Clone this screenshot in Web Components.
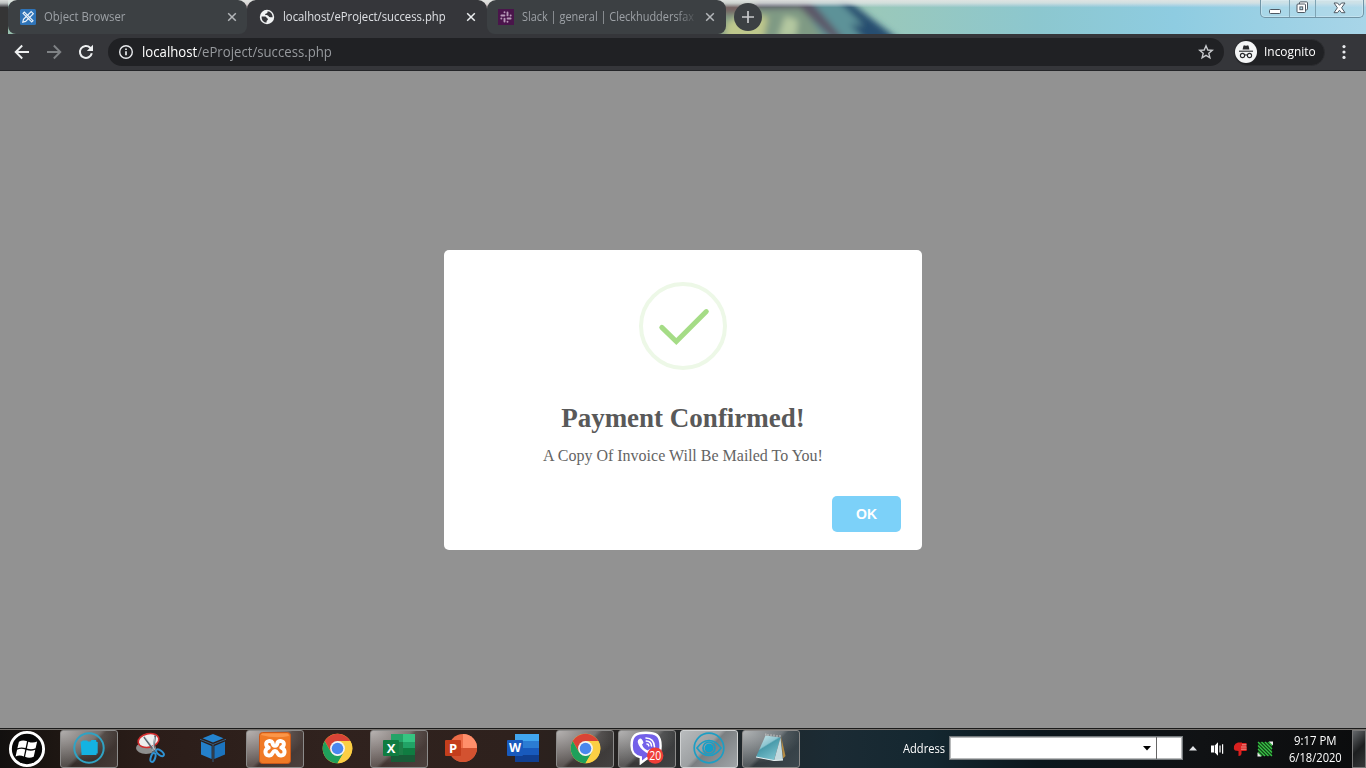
<!DOCTYPE html>
<html lang="en">
<head>
<meta charset="utf-8">
<title>localhost/eProject/success.php</title>
<style>
html,body{margin:0;width:1366px;height:768px;overflow:hidden;background:#929292}
body{font-family:"Open Sans","Noto Sans",sans-serif}
</style>
</head>
<body>
<desktop-screen></desktop-screen>
<script>
const define=(name,html,setup)=>customElements.define(name,class extends HTMLElement{
  connectedCallback(){
    if(this.shadowRoot)return;
    const root=this.attachShadow({mode:"open"});
    const t=document.createElement("template");
    t.innerHTML=typeof html==="function"?html(this):html;
    root.append(t.content.cloneNode(true));
    if(setup)setup(this,root);
  }
});

/* A line of text condensed to a given width */
define("fit-text",`<style>:host{display:block;flex:none;white-space:nowrap;overflow:visible}
span{display:inline-block;transform-origin:0 50%}</style><span><slot></slot></span>`,(el,root)=>{
  const s=root.querySelector("span"),w=+el.getAttribute("w");
  el.style.width=w+"px";
  s.style.transform="scaleX("+w/s.offsetWidth+")";
});

/* Icons */
const chrome=`<svg width="31" height="31" viewBox="0 0 48 48"><circle cx="24" cy="24" r="23" fill="#fbc93a"/>
<path d="M4.1 12.5A23 23 0 0 1 43.9 12.5H24L14 29.7Z" fill="#d94436"/><path d="M4.1 12.5A23 23 0 0 0 24 47L34 29.7 24 35.5 14 29.7Z" fill="#1fa05b"/>
<path d="M24 47A23 23 0 0 0 43.9 12.5H24L34 29.7Z" fill="#fccf44"/><circle cx="24" cy="24" r="11.5" fill="#f3f3f3"/><circle cx="24" cy="24" r="9" fill="#4a87ee"/></svg>`;
const icons={
object:`<svg width="16" height="16" viewBox="0 0 16 16"><rect width="16" height="16" rx="1.5" fill="#2f74b8"/><g fill="none" stroke="#eaf2fa" stroke-width="1.2"><path d="M3 4.3 4.3 3 13 11.7 11.7 13Z"/><path d="M11.2 2.6 13.3 4.7 5.6 12.4 2.8 13.1 3.5 10.3Z"/></g></svg>`,
globe:`<svg width="16" height="16" viewBox="0 0 16 16"><circle cx="8" cy="8" r="7.2" fill="#f1f3f4"/><path d="M2.6 7.4H6C7.7 7.4 7.4 9.4 8.8 9.6V11C8 11.2 7.4 11.8 7.6 13.6 4.6 13.4 2.4 11 2.6 7.4Z" fill="#35363a"/><path d="M8.6 2.3 8.4 3.8C8 4.8 6.6 4.4 6 5.4 6.4 6.6 8.8 6 9.6 7 10 8.4 11.4 8.4 13.6 8.2 13.6 5 11.6 2.6 8.6 2.3Z" fill="#35363a"/></svg>`,
slack:`<svg width="16" height="16" viewBox="0 0 16 16"><rect width="16" height="16" fill="#4a154b"/><g stroke="#b79ab8" stroke-width="1.9" stroke-linecap="round"><path d="M6.5 3.2V3.3M3.4 6.5H6.4M9.5 3.5V6.4M12.7 6.5H12.6M9.5 12.8V12.7M12.6 9.5H9.6M6.5 12.5V9.6M3.3 9.5H3.4"/></g></svg>`,
close:`<svg width="10" height="10" viewBox="0 0 10 10"><path d="M1.2 1.2 8.8 8.8M8.8 1.2 1.2 8.8" stroke="currentColor" stroke-width="1.5"/></svg>`,
back:`<svg width="16" height="16" viewBox="0 0 16 16"><path d="M15 8H2M8.2 1.5 1.7 8 8.2 14.5" fill="none" stroke="currentColor" stroke-width="1.9"/></svg>`,
forward:`<svg width="16" height="16" viewBox="0 0 16 16"><path d="M1 8H14M7.8 1.5 14.3 8 7.8 14.5" fill="none" stroke="currentColor" stroke-width="1.9"/></svg>`,
reload:`<svg width="16" height="16" viewBox="0 0 16 16"><path d="M13.8 9.2A6 6 0 1 1 12.2 3.7L13.5 5" fill="none" stroke="currentColor" stroke-width="2"/><path d="M15 .8V7H8.8Z" fill="currentColor"/></svg>`,
info:`<svg width="16" height="16" viewBox="0 0 16 16"><circle cx="8" cy="8" r="6.3" fill="none" stroke="#e8eaed" stroke-width="1.4"/><path d="M8 7.2V11.3M8 4.4V6" stroke="#e8eaed" stroke-width="1.7"/></svg>`,
star:`<svg width="16" height="16" viewBox="0 0 16 16"><path d="M8 1.8 9.8 6 14.3 6.3 10.8 9.3 11.9 13.8 8 11.4 4.1 13.8 5.2 9.3 1.7 6.3 6.2 6Z" fill="none" stroke="#c8cacd" stroke-width="1.4"/></svg>`,
incognito:`<svg width="22" height="22" viewBox="0 0 22 22"><circle cx="11" cy="11" r="11" fill="#f4f5f6"/><path d="M7.6 8.6 8.4 4.9Q8.7 4.2 9.5 4.4L11 4.8 12.5 4.4Q13.3 4.2 13.6 4.9L14.4 8.6Z" fill="#292a2d"/><path d="M4 10.2H18" stroke="#292a2d" stroke-width="1.1"/><g fill="none" stroke="#292a2d" stroke-width="1.1"><circle cx="7.5" cy="14.5" r="2.1"/><circle cx="14.5" cy="14.5" r="2.1"/><path d="M9.7 14.2Q11 13.4 12.3 14.2"/></g></svg>`,
menu:`<svg width="4" height="16" viewBox="0 0 4 16" fill="#e8eaed"><circle cx="2" cy="2.6" r="1.6"/><circle cx="2" cy="8" r="1.6"/><circle cx="2" cy="13.4" r="1.6"/></svg>`,
start:`<svg width="38" height="38" viewBox="0 0 38 38"><circle cx="19" cy="19" r="16.6" fill="#060606" stroke="#fff" stroke-width="2.9"/><g fill="#fff" transform="translate(-.5 -.6) scale(1.04)"><path d="M11 11.8Q14.5 9.6 18.8 11.3L17.4 18Q13.4 16.6 9.5 18.2Z"/><path d="M20 11.8Q24.5 13.6 28.5 11.7L27 18.2Q22.8 20 18.6 18.4Z"/><path d="M9.2 19.5Q13 17.9 17.1 19.3L15.7 26Q11.7 24.3 7.8 26Z"/><path d="M18.3 19.8Q22.6 21.4 26.7 19.6L25.2 26.4Q20.8 28.2 16.9 26.4Z"/></g></svg>`,
folder:`<svg width="32" height="32" viewBox="0 0 32 32"><circle cx="16" cy="16" r="14.7" fill="none" stroke="#2fa3c4" stroke-width="2"/><path d="M7.5 9.5H9L9.5 8.5H14L15 9.5H17.5L18.5 8H23L23.5 10H24.7V21.5H23.5V23H8.5V21.8L7.8 12Z" fill="#14b3e2"/></svg>`,
snip:`<svg width="34" height="34" viewBox="0 0 34 34"><ellipse cx="12" cy="17" rx="10" ry="6" fill="#8f8f8f"/><ellipse cx="14.5" cy="9.5" rx="10.5" ry="6.8" transform="rotate(-12 14.5 9.5)" fill="#eee" stroke="#d22c2d" stroke-width="1.6"/><path d="M10 6 21 21M21.3 4.5 18.8 22" stroke="#59656f" stroke-width="1.8"/><path d="M11 6 22 20M20.8 6 18.8 20" stroke="#cdd8df" stroke-width=".8"/><g fill="none" stroke="#2f92d2" stroke-width="2"><ellipse cx="19" cy="26.5" rx="2.2" ry="4.6" transform="rotate(18 19 26.5)"/><ellipse cx="26" cy="21.8" rx="2.2" ry="4.6" transform="rotate(-51 26 21.8)"/></g></svg>`,
cube:`<svg width="28" height="30" viewBox="0 0 28 30"><path d="M14 1 24.5 5.2 14 9.4 3.5 5.2Z" fill="#2484d0"/><path d="M2 8.5 12.6 13V26L2 21.5Z" fill="#2480cb"/><path d="M26 8.5 15.4 13V26L26 21.5Z" fill="#1c74be"/><path d="M14 11.5V29M1 6.3 14 11.5 27 6.3" fill="none" stroke="#356c9b" stroke-width=".8"/></svg>`,
xampp:`<svg width="32" height="32" viewBox="0 0 32 32"><rect x=".5" y=".5" width="31" height="31" rx="3" fill="#f07a26" stroke="#c9581a"/><path d="M2 3Q2 1.5 4 1.5H28Q30 1.5 30 4Q16 7 2 3Z" fill="#ffa358" opacity=".7"/><g fill="none" stroke="#fff" stroke-width="4" stroke-linecap="round" stroke-linejoin="round"><path d="M13.5 10.7Q12.5 8.6 9.7 9.1C6.2 9.9 6.4 14.1 9.7 15.6 5.2 17.1 5.4 23.3 10 23.6 14 23.8 13 19 16 19S18 23.8 22 23.6C26.6 23.3 26.8 17.1 22.3 15.6 25.6 14.1 25.8 9.9 22.3 9.1Q19.5 8.6 18.5 10.7C18 14.7 14 14.7 13.5 10.7Z"/></g></svg>`,
chrome,
excel:`<svg width="34" height="30" viewBox="0 0 34 30"><path d="M9 1H33V29H9Z" fill="#1d7f48"/><path d="M9 1H21V9H9Z" fill="#24a367"/><path d="M21 1H33V9H21Z" fill="#36c481"/><path d="M21 9H33V15H21Z" fill="#21a366"/><path d="M21 15H33V22H21Z" fill="#107c41"/><path d="M9 22H33V29H9Z" fill="#185c37"/><rect x="1" y="7" width="16" height="16" rx="1" fill="#107c41"/><text x="9" y="19.5" text-anchor="middle" font-family="Open Sans" font-weight="700" font-size="13" fill="#fff">X</text></svg>`,
ppt:`<svg width="34" height="30" viewBox="0 0 34 30"><circle cx="19" cy="15" r="14" fill="#ed6c47"/><path d="M19 1A14 14 0 0 1 33 15H19Z" fill="#ff8f6b"/><path d="M5 15A14 14 0 0 0 33 15Z" fill="#d35230"/><rect x="1" y="7" width="16" height="16" rx="1" fill="#c43e1c"/><text x="9" y="19.5" text-anchor="middle" font-family="Open Sans" font-weight="700" font-size="13" fill="#fff">P</text></svg>`,
word:`<svg width="34" height="30" viewBox="0 0 34 30"><path d="M9 1H33V8H9Z" fill="#41a5ee"/><path d="M9 8H33V15H9Z" fill="#2b7cd3"/><path d="M9 15H33V22H9Z" fill="#185abd"/><path d="M9 22H33V29H9Z" fill="#103f91"/><rect x="1" y="7" width="16" height="16" rx="1" fill="#185abd"/><text x="9" y="19.3" text-anchor="middle" font-family="Open Sans" font-weight="700" font-size="12.5" fill="#fff">W</text></svg>`,
viber:`<svg width="34" height="34" viewBox="0 0 34 34"><path d="M16 1.7C26 1.7 30.6 4.2 30.6 15 30.6 24.5 27 27.2 17 27.2L10.8 32V26.3C4 24.8 1.6 21.5 1.6 14.5 1.6 4.2 6 1.7 16 1.7Z" fill="#7360e9" stroke="#fff" stroke-width="2.4"/><path d="M10 7.5Q12 7.2 13.5 11.5 13 13 12 13.6 13.5 18 18 19.5 19.5 17.5 22 19 24.6 20.8 22.5 22.5 20.5 24.5 16 21.5 9 17 7.7 11 7.4 8.7 10 7.5Z" fill="#fff"/><path d="M16 7Q24 7.2 24.5 16M16.3 10Q21.2 10.3 21.5 15M17 13Q18.5 13 18.8 14.8" fill="none" stroke="#fff" stroke-width="1.6" stroke-linecap="round"/><circle cx="25.2" cy="24.6" r="8.2" fill="#f03e38"/><text x="25.2" y="29" text-anchor="middle" font-family="Open Sans" font-size="12" textLength="12" lengthAdjust="spacingAndGlyphs" fill="#fff">20</text></svg>`,
eye:`<svg width="32" height="32" viewBox="0 0 32 32"><g fill="none" stroke="#1d9ec4" stroke-width="1.7"><circle cx="16" cy="16" r="14.8"/><path d="M4 16Q9 8.5 16 8.5T28 16Q23 23.5 16 23.5T4 16Z"/><circle cx="16" cy="16" r="6"/></g><circle cx="16" cy="16" r="4.4" fill="#159ec8"/></svg>`,
notepad:`<svg width="34" height="32" viewBox="0 0 34 32"><path d="M27 4 31.5 24 29 26.5Z" fill="#b38b43"/><path d="M11.5 3.5 26.5 5.5 20 28.5 2 25Z" fill="url(#pg)"/><path d="M26.5 5.5 29 28 20 28.5Z" fill="#c3dade"/><path d="M2 25 20 28.5 29 28" fill="none" stroke="#eaf4f6"/><path d="M11.5 3.5 12 1.5M14 4V2M17 4.3V2.2M20 4.6V2.5M23 5V3M26 5.3V3.1" stroke="#bbb" stroke-width="1.2"/><defs><linearGradient id="pg" x1="0" y1="0" x2=".6" y2="1"><stop stop-color="#d5eaec"/><stop offset=".45" stop-color="#8dc5d0"/><stop offset=".5" stop-color="#4a9bab"/><stop offset="1" stop-color="#79c0cc"/></linearGradient></defs></svg>`,
sound:`<svg width="14" height="16" viewBox="0 0 14 16"><path d="M1 4.5H4V11.5H1Z" fill="#fff"/><path d="M4.8 4.5 8 1.2V14.8L4.8 11.5Z" fill="#fff"/><path d="M10 4.5V11.5M12.6 3.2V12.8" stroke="#fff" stroke-width="1.2"/></svg>`,
thumb:`<svg width="15" height="16" viewBox="0 0 15 16"><path d="M1 5Q2 2 5 1.5H9V5.5L13.5 6V10H8.5V13Q8 15.2 5.5 15V10L2 9.5Q.3 8 1 5Z" fill="#d9201f"/><path d="M8 2H13.5V9.5H8Z" fill="#d9201f"/><path d="M9 3.8H13.5M8 6H13.5M8 8.2H13.5" stroke="#f3b1a8" stroke-width=".8"/></svg>`,
green:`<svg width="16" height="16" viewBox="0 0 16 16"><path d="M1 1H15V15H1Z" fill="#123b16"/><path d="M1 1 15 15M4.5 1 15 11.5M8 1 15 8M11.5 1 15 4.5M1 4.5 11.5 15M1 8 8 15M1 11.5 4.5 15" stroke="#37c345" stroke-width="1.3"/><path d="M12 .5H16V4.5ZM.5 11.5V15.5H4.5Z" fill="#eee"/></svg>`
};
define("ui-icon",el=>`<style>:host{display:flex;flex:none}svg{display:block}</style>${icons[el.getAttribute("name")]}`);

define("browser-tab",el=>`<style>
:host{display:flex;box-sizing:border-box;width:239px;height:34px;flex:none;align-items:center;padding:0 10px 0 12px;border-radius:9px 9px 8px 8px;background:#3c4043;color:#9da1a6;font-size:12.2px}
:host([active]){background:#35363a;color:#dfe1e5;width:240px;border-radius:9px 9px 0 0;padding-right:11px}
:host([fade]){padding:0 11px}
.t{flex:1;min-width:0;margin-left:8px;padding-bottom:1px;overflow:hidden}
:host([fade]) .t{-webkit-mask:linear-gradient(90deg,#000 154px,transparent 176px)}
.x{color:#b4b7ba}:host([active]) .x{color:#eceef0}</style>
<ui-icon name="${el.getAttribute("icon")}"></ui-icon><div class="t"><fit-text w="${el.getAttribute("w")}"><slot></slot></fit-text></div><ui-icon class="x" name="close"></ui-icon>`);

define("window-buttons",`<style>:host{display:flex;width:104px;height:18px;box-sizing:border-box;border:1px solid #7195a6;border-top:0;border-radius:0 0 5px 5px;background:rgba(190,224,237,.4);box-shadow:inset 0 0 0 1px rgba(225,243,250,.4)}
div{display:flex;justify-content:center;align-items:center;box-sizing:border-box;padding-bottom:2px}
.a{width:28px}.b{width:27px;border-left:1px solid #7fa4b4;border-right:1px solid #7fa4b4}.c{flex:1}
svg{display:block}</style>
<div class="a"><svg width="13" height="14"><rect x=".5" y="8.5" width="11" height="4" rx="1" fill="#fff" stroke="#4f5963"/></svg></div>
<div class="b"><svg width="13" height="13"><rect x="3.5" y=".9" width="8" height="8" rx="1" fill="#fff" stroke="#4f5963"/><rect x="1" y="3" width="8.5" height="8.5" rx="1" fill="#fff" stroke="#4f5963"/><rect x="3.9" y="5.9" width="2.8" height="2.8" fill="#b9dbe8" stroke="#4f5963"/></svg></div>
<div class="c"><svg width="13" height="12"><path d="M1 1H4.5L6.5 3.3 8.5 1H12L8.6 5.8 12 10.7H8.5L6.5 8.2 4.5 10.7H1L4.4 5.8Z" fill="#fff" stroke="#4f5963"/></svg></div>`);

define("tab-strip",`<style>:host{display:flex;position:relative;height:34px;overflow:hidden;background:#8fc4d0}
.glass{position:absolute;inset:0}.row{position:relative;display:flex;flex:1;padding-left:8px}
.plus{box-sizing:border-box;width:28px;height:28px;margin:3px 0 0 8px;border-radius:50%;background:#3c4043;display:flex;align-items:center;justify-content:center}
window-buttons{margin:0 2px 0 auto}</style>
<svg class="glass" width="1366" height="34"><defs><filter id="b" x="-20%" y="-60%" width="140%" height="220%"><feGaussianBlur stdDeviation="3.2"/></filter><linearGradient id="sky"><stop offset=".59" stop-color="#98c0ae"/><stop offset=".64" stop-color="#9ac8ba"/><stop offset=".76" stop-color="#8cc7cf"/><stop offset=".86" stop-color="#8ecce1"/><stop offset="1" stop-color="#a8d5e8"/></linearGradient><linearGradient id="top" x2="0" y2="1"><stop offset="0" stop-color="#e3e5e3" stop-opacity=".95"/><stop offset=".09" stop-color="#dfe4e2" stop-opacity=".8"/><stop offset=".22" stop-color="#dde" stop-opacity="0"/></linearGradient></defs>
<rect width="1366" height="34" fill="url(#sky)"/><g filter="url(#b)"><path d="M700 -10H838L900 44H700Z" fill="#5d9298"/><path d="M700 -10H790L828 44H700Z" fill="#7f9a84"/><path d="M832 -6 850 2 902 42H866L850 24 864 26Z" fill="#264d70"/><path d="M755 -6H805L846 42H836L800 8 755 9Z" fill="#5c5668"/><path d="M700 3H760L750 14H700Z" fill="#765f60"/><path d="M726 23 745 13 768 17 763 40H725Z" fill="#bec78c"/><path d="M785 16 798 20 796 36 778 38Z" fill="#b4c8a0"/></g>
<path d="M0 0H8V34H0Z" fill="#353535"/><path d="M235 0H260V9H235ZM475 0H500V9H475Z" fill="#c8b5b0"/><path d="M235 9H260V34H235ZM475 9H500V34H475Z" fill="#35363a"/><rect width="1366" height="34" fill="url(#top)"/></svg>
<div class="row"><browser-tab icon="object" w="81">Object Browser</browser-tab><browser-tab active icon="globe" w="163">localhost/eProject/success.php</browser-tab><browser-tab fade icon="slack" w="181">Slack | general | Cleckhuddersfax |</browser-tab>
<div class="plus"><svg width="12" height="12"><path d="M0 6H12M6 0V12" stroke="#c7c9cb" stroke-width="1.7"/></svg></div><window-buttons></window-buttons></div>`);

define("tool-bar",`<style>:host{display:flex;box-sizing:border-box;height:37px;background:#35363a;border-bottom:1px solid #242528;padding:4px 20px 4px 14px;align-items:center;color:#eef0f1}
.nav{display:flex;gap:16px}.nav .f{color:#7f8285}
.omni{box-sizing:border-box;display:flex;flex:none;align-items:center;margin-left:14px;width:1116px;height:28px;border-radius:14px;background:#202124;padding:0 10px;font-size:13.6px;color:#96999d}
.omni fit-text{margin-left:8px;padding-bottom:2px}.omni b{font-weight:400;color:#fff}.omni .s{margin-left:auto}
.chip{box-sizing:border-box;display:flex;align-items:center;width:91px;height:27px;margin-left:10px;border-radius:14px;background:#202124;border:1px solid #2c2d30;font-size:12.4px;padding-left:0;gap:7px;color:#fff}
.chip fit-text{padding-bottom:1px}
.m{margin-left:auto}</style>
<div class="nav"><ui-icon name="back"></ui-icon><ui-icon class="f" name="forward"></ui-icon><ui-icon name="reload"></ui-icon></div>
<div class="omni"><ui-icon name="info"></ui-icon><fit-text w="190"><b>localhost</b>/eProject/success.php</fit-text><ui-icon class="s" name="star"></ui-icon></div>
<div class="chip"><ui-icon name="incognito"></ui-icon><fit-text w="52">Incognito</fit-text></div><ui-icon class="m" name="menu"></ui-icon>`);

define("success-modal",`<style>:host{display:flex;flex-direction:column;align-items:center;box-sizing:border-box;width:478px;height:300px;border-radius:5px;background:#fff;padding:32px 21px 18px;font-family:"Liberation Serif",serif;color:#595959}
svg{display:block;flex:none}h1{margin:30px 0 0;font-size:27px;line-height:36px;font-weight:700}p{margin:10px 0 0;font-size:16px;line-height:20px;color:#646464}
h1,p{text-align:center}
button{align-self:flex-end;margin-top:auto;width:69px;height:36px;border:0;border-radius:5px;background:#7cd1f9;color:#fff;font:700 14px "Liberation Sans",sans-serif;padding:0}</style>
<svg width="88" height="88"><circle cx="44" cy="44" r="42" fill="none" stroke="#edf8e7" stroke-width="4"/><path d="M22.8 45.4 37.3 59.6 67.3 29.6" fill="none" stroke="#a5dc86" stroke-width="5" stroke-linecap="round"/></svg>
<h1><slot name="title"></slot></h1><p><slot></slot></p><button>OK</button>`);

define("task-button",el=>`<style>:host{display:flex;flex:none;box-sizing:border-box;width:58px;height:38px;align-items:center;justify-content:center;border:1px solid transparent;border-radius:3px;padding-bottom:1px}
:host([open]){border-color:#8c8b8a;background:radial-gradient(ellipse 60px 34px at 0 0,rgba(255,255,255,.5),rgba(255,255,255,0)),linear-gradient(135deg,rgba(255,255,255,.3) 0%,rgba(255,255,255,.24) 44%,rgba(255,255,255,.09) 50%,rgba(255,255,255,.14) 100%)}
:host([current]){border-color:#d0d2d3;background:linear-gradient(135deg,#b9bcbe,#9da0a2 44%,#7b7f82 50%,#a0a5a8)}</style><ui-icon name="${el.getAttribute("icon")}"></ui-icon>`);

define("system-tray",`<style>:host{display:flex;align-items:center;margin-left:auto;height:100%;color:#fff;font-size:12.2px}
.addr{box-sizing:border-box;display:flex;width:234px;height:24px;margin:0 0 1px 4px;border:1px solid #74797c;box-shadow:inset 0 0 0 1px #b8babb;background:#fff}
.combo{width:207px;display:flex;align-items:center;justify-content:flex-end;padding-right:5px;box-sizing:border-box;border-right:1px solid #666}
.up{margin-left:6px}.icons{display:flex;gap:9px;margin-left:13px;align-items:center}
.clock{display:flex;flex-direction:column;align-items:center;width:56px;margin-left:14px;line-height:17px;font-size:12.2px}
.peek{box-sizing:border-box;width:14px;height:38px;margin-left:9px;border:1px solid #777;background:linear-gradient(135deg,#65686b,#1d1f20 50%,#363839)}svg{display:block}</style>
<fit-text w="42">Address</fit-text><div class="addr"><div class="combo"><svg width="8" height="5"><path d="M0 0H8L4 4.5Z" fill="#000"/></svg></div></div>
<svg class="up" width="8" height="5"><path d="M0 4.5H8L4 0Z" fill="#e2e5e8"/></svg>
<div class="icons"><ui-icon name="sound"></ui-icon><ui-icon name="thumb"></ui-icon><ui-icon name="green"></ui-icon></div>
<div class="clock"><fit-text w="43">9:17 PM</fit-text><fit-text w="53">6/18/2020</fit-text></div><div class="peek"></div>`);

define("task-bar",`<style>:host{display:flex;box-sizing:border-box;height:40px;align-items:center;border-top:1px solid #1b1b1b;background:linear-gradient(90deg,#12100f 0,#1d1612 4%,#2b1d19 11%,#30221e 24%,#2e211d 38%,#26211f 43%,#20272b 54%,#1b2b34 61%,#142730 68%,#0c171d 76%,#101214 88%,#0b0c0d 100%);box-shadow:inset 0 1px #77736f;padding-left:8px}
.apps{display:flex;gap:4px;margin-left:14px}</style>
<ui-icon name="start"></ui-icon><div class="apps"><task-button open icon="folder"></task-button><task-button icon="snip"></task-button><task-button icon="cube"></task-button><task-button open icon="xampp"></task-button><task-button icon="chrome"></task-button><task-button open icon="excel"></task-button><task-button icon="ppt"></task-button><task-button icon="word"></task-button><task-button open icon="chrome"></task-button><task-button open icon="viber"></task-button><task-button open current icon="eye"></task-button><task-button open icon="notepad"></task-button></div><system-tray></system-tray>`);

define("desktop-screen",`<style>:host{display:flex;flex-direction:column;width:1366px;height:768px}
main{flex:1;display:flex;align-items:center;justify-content:center;background:#929292}success-modal{margin-top:1px}</style>
<tab-strip></tab-strip><tool-bar></tool-bar><main><success-modal><span slot="title">Payment Confirmed!</span>A Copy Of Invoice Will Be Mailed To You!</success-modal></main><task-bar></task-bar>`);
</script>
</body>
</html>
